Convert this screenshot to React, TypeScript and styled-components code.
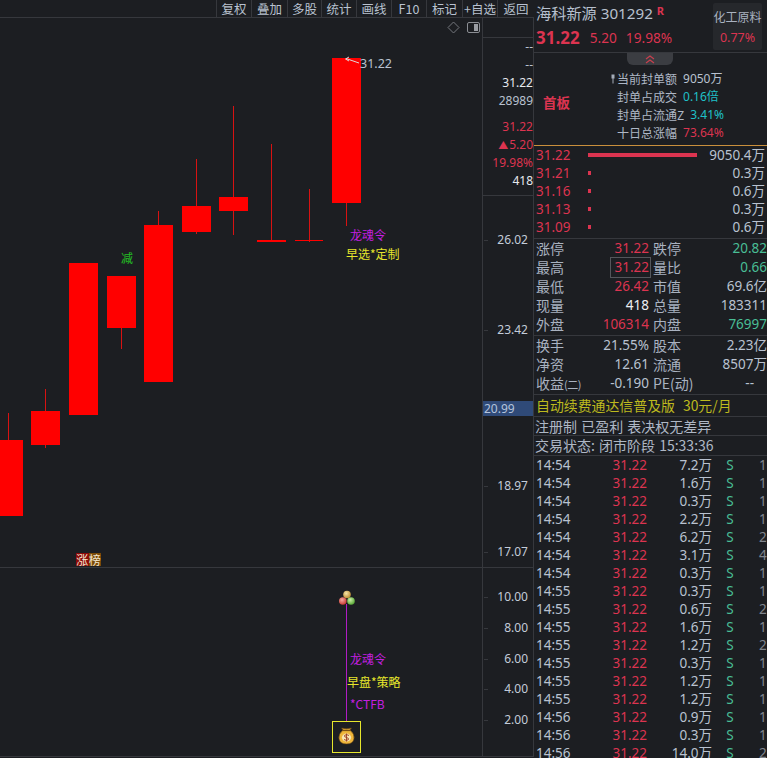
import React from "react";
import styled, { createGlobalStyle } from "styled-components";

const FONT = `"Noto Sans", "Noto Sans CJK SC", sans-serif`;
const CJK = `"Noto Sans CJK SC", "Noto Sans", sans-serif`;
const BG = "#1c1e22";
const LINE = "#36383d";
const TEXT = "#b9c2d0";
const RED = "#dc3450";
const GREEN = "#49bd95";

const Global = createGlobalStyle`
  html, body { margin: 0; padding: 0; background: ${BG}; }
  * { box-sizing: border-box; }
`;

const Page = styled.div`
  display: flex; width: 767px; height: 758px; overflow: hidden;
  background: ${BG}; color: ${TEXT}; font-family: ${FONT};
`;
const Left = styled.div`
  width: 534px; height: 758px; display: flex; flex-direction: column; flex: none;
`;
const Toolbar = styled.div`
  height: 18px; display: flex; justify-content: flex-end; border-bottom: 1px solid ${LINE}; flex: none;
`;
const ToolButton = styled.div`
  width: ${p => p.$w}px; height: 17px; border-left: 1px solid ${LINE};
  display: flex; align-items: center; justify-content: center;
  font: 12.5px/17px ${CJK}; color: ${TEXT}; white-space: nowrap;
`;
const MainPane = styled.div`
  height: 550px; display: flex; border-bottom: 1px solid ${LINE}; flex: none;
`;
const SubPane = styled.div`
  height: 189px; display: flex; border-bottom: 1px solid ${LINE}; flex: none;
`;
const Canvas = styled.div`
  position: relative; width: 482px; height: 100%; flex: none;
`;
const ChartSvg = styled.svg`
  position: absolute; left: 0; top: 0; display: block;
`;
const CornerIcons = styled.div`
  position: absolute; right: 2px; top: 3px; display: flex; align-items: center; gap: 7px;
`;
const Note = styled.div`
  position: absolute; left: ${p => p.$x}px; top: ${p => p.$y}px; transform: translateY(-50%);
  font: 12px/16px ${CJK}; color: ${p => p.$c}; white-space: nowrap;
`;
const PriceTag = styled(Note)`
  font: 12.5px/16px ${FONT};
`;
const Badge = styled.div`
  position: absolute; left: 76px; top: 535px; height: 13px; display: flex;
  font: 12px/13px ${CJK}; color: #f4e6d0;
`;
const BadgeCell = styled.span`
  width: 12.5px; text-align: center; background: ${p => p.$c};
`;
const Axis = styled.div`
  position: relative; width: 52px; height: 100%; flex: none;
  border-left: 1px solid ${LINE}; border-right: 1px solid ${LINE};
`;
const AxisHead = styled.div`
  height: 20px; border-bottom: 1px solid ${LINE};
`;
const AxisQuote = styled.div`
  height: 158px; border-bottom: 1px solid ${LINE}; display: flex; flex-direction: column;
`;
const AxisValue = styled.div`
  height: 18px; flex: none; text-align: right; font: 12px/18px ${FONT}; color: ${p => p.$c || TEXT};
  margin-top: ${p => p.$gap || 0}px; white-space: nowrap;
`;
const Triangle = styled.span`
  font-size: 10px; margin-right: 1px;
`;
const Scale = styled.div`
  position: absolute; right: 5px; top: ${p => p.$y}px; transform: translateY(-50%);
  font: 12px/14px ${FONT}; color: #c3ccd9;
`;
const Tick = styled.div`
  position: absolute; left: 1px; top: ${p => p.$y}px; width: 4px; height: 1px; background: ${LINE};
`;
const Current = styled.div`
  position: absolute; left: 0; right: 0; top: 383px; height: 15px; background: #2f4a78;
  font: 12px/15px ${FONT}; color: #b4c4dc; padding-left: 1px;
`;

const Right = styled.div`
  width: 233px; height: 758px; flex: none; display: flex; flex-direction: column; overflow: hidden;
`;
const Header = styled.div`
  height: 53px; flex: none; display: flex; justify-content: space-between;
  border-bottom: 1px solid ${LINE}; padding: 3px 5px 0 2px;
`;
const Identity = styled.div`
  display: flex; flex-direction: column;
`;
const NameRow = styled.div`
  height: 20px; display: flex; align-items: center; gap: 5px; font: 15.2px/20px ${FONT}; white-space: nowrap; color: #b7c0ce;
`;
const Flag = styled.span`
  font: bold 11px/11px ${FONT}; color: ${RED}; margin: -6px 0 0 -1px;
`;
const QuoteRow = styled.div`
  display: flex; align-items: center; gap: 9px; height: 24px; margin-top: 3px; color: ${RED}; font: 13.7px/24px ${FONT};
  white-space: nowrap;
`;
const BigPrice = styled.span`
  font: bold 17px/24px ${FONT}; margin-right: 1px;
`;
const Sector = styled.div`
  width: 49px; height: 47px; background: #26282c; display: flex; flex-direction: column;
  align-items: center; justify-content: space-between; padding: 3px 0 3px; border-radius: 2px;
`;
const SectorName = styled.div`
  font: 12px/18px ${CJK}; color: #a9b2c0; white-space: nowrap; margin-top: 2px;
`;
const SectorValue = styled.div`
  font: 12.5px/18px ${FONT}; color: ${RED};
`;
const Seal = styled.div`
  position: relative; height: 93px; flex: none; display: flex; border-bottom: 1px solid #c98f3c;
`;
const Collapse = styled.div`
  position: absolute; left: 93px; top: 0; width: 46px; height: 12px; background: #3b3d42;
  border-radius: 0 0 6px 6px; display: flex; align-items: center; justify-content: center;
`;
const Board = styled.div`
  width: 83px; flex: none; padding: 40px 0 0 9px; font: bold 13.5px/18px ${CJK}; color: ${RED};
`;
const SealRows = styled.div`
  position: relative; padding-top: 17px; display: flex; flex-direction: column;
`;
const SealRow = styled.div`
  height: 18px; display: flex; gap: 6px; font: 12px/18px ${CJK}; color: #aeb7c5; white-space: nowrap;
`;
const SealValue = styled.span`
  font: 12px/18px ${FONT}; color: ${p => p.$c};
`;
const Pin = styled.svg`
  position: absolute; left: -6px; top: 21px;
`;
const Book = styled.div`
  height: 93px; flex: none; border-bottom: 1px solid ${LINE}; padding-bottom: 3px;
`;
const BookRow = styled.div`
  height: 18px; display: flex; align-items: center; padding: 0 2px; font: 13.5px/18px ${FONT};
`;
const BookPrice = styled.span`
  width: 52px; flex: none; color: ${RED};
`;
const BookBar = styled.span`
  display: block; height: 4px; flex: none; background: ${RED};
`;
const BookQty = styled.span`
  margin-left: auto; color: ${TEXT};
`;
const Stats = styled.div`
  flex: none; height: ${p => p.$h}px; border-bottom: 1px solid ${LINE};
  display: grid; grid-template-columns: 117px 116px; grid-auto-rows: 19px;
`;
const Stat = styled.div`
  display: flex; justify-content: space-between; align-items: center; padding: 0 ${p => p.$r}px 0 2px; white-space: nowrap;
`;
const StatLabel = styled.span`
  font: 14px/19px ${CJK}; color: #a9b2c0;
`;
const SmallParen = styled.span`
  font-size: 11px; letter-spacing: -0.5px;
`;
const StatValue = styled.span`
  font: 13.5px/19px ${FONT}; color: ${p => p.$c || TEXT};
  ${p => p.$boxed && `outline: 1px solid #54565b; padding: 0 1px 0 3px; margin-right: -1px;`}
  ${p => p.$inset && `margin-right: 13px;`}
`;
const Ad = styled.div`
  height: 22px; flex: none; border-bottom: 1px solid ${LINE}; padding-left: 2px;
  font: 13.9px/21px ${CJK}; color: #bdb91e; white-space: nowrap; display: flex; gap: 8px;
`;
const InfoRow = styled.div`
  height: ${p => p.$h}px; flex: none; border-bottom: 1px solid ${LINE}; padding-left: 1px;
  font: 14px/${p => p.$h - 1}px ${CJK}; word-spacing: 1px; color: #aeb7c5; white-space: nowrap;
`;
const Ticks = styled.div`
  display: flex; flex-direction: column; flex: none;
`;
const TickRow = styled.div`
  height: 18px; flex: none; display: flex; padding-left: 2px; font: 13.5px/18px ${FONT}; white-space: nowrap;
`;
const TickTime = styled.span`
  width: 60px; flex: none; color: ${TEXT};
`;
const TickPrice = styled.span`
  width: 51px; flex: none; text-align: right; color: ${RED};
`;
const TickVol = styled.span`
  width: 65px; flex: none; text-align: right; color: ${TEXT};
`;
const TickSide = styled.span`
  width: 36px; flex: none; text-align: center; color: ${GREEN};
`;
const TickCount = styled.span`
  margin-left: 11px; color: #80858d;
`;

const TOP = 18;
const candles = [
  [-4, 27, 440, 516, 8.5, 413, 440],
  [31, 29, 411, 445, 45.5, 389, 448],
  [69, 29, 263, 415, 83.5, 263, 415],
  [107, 29, 276, 328, 121.5, 276, 349],
  [144, 29, 225, 382, 158.5, 211, 382],
  [182, 29, 206, 232, 196.5, 159, 234],
  [219, 29, 197, 211, 233.5, 106, 235],
  [257, 29, 240, 242, 271.5, 144, 242],
  [295, 28, 240, 241, 309.5, 189, 242],
  [332, 29, 58, 203, 346.5, 58, 226],
];

const tools: [string, number][] = [["复权", 35], ["叠加", 36], ["多股", 34], ["统计", 35], ["画线", 35], ["F10", 35], ["标记", 36], ["+自选", 35], ["返回", 37]];
const quoteAxis: [React.ReactNode, string?, number?][] = [
  ["--"], ["--"], ["31.22", "#e6e9ee"], ["28989"],
  ["31.22", RED, 8], [<><Triangle>▲</Triangle>5.20</>, RED], ["19.98%", RED], ["418", "#e6e9ee"],
];
const book: [string, number, string][] = [["31.22", 109, "9050.4万"], ["31.21", 3, "0.3万"], ["31.16", 3, "0.6万"], ["31.13", 3, "0.3万"], ["31.09", 3, "0.6万"]];
const ticks: [string, string, number][] = [
  ["14:54", "7.2万", 1], ["14:54", "1.6万", 1], ["14:54", "0.3万", 1], ["14:54", "2.2万", 1], ["14:54", "6.2万", 2], ["14:54", "3.1万", 4], ["14:54", "0.3万", 1],
  ["14:55", "0.3万", 1], ["14:55", "0.6万", 2], ["14:55", "1.6万", 1], ["14:55", "1.2万", 2], ["14:55", "0.3万", 1], ["14:55", "1.2万", 1], ["14:55", "1.2万", 1],
  ["14:56", "0.9万", 1], ["14:56", "0.3万", 1], ["14:56", "14.0万", 2],
];
type StatItem = { label: React.ReactNode; value: string; color?: string; boxed?: boolean; inset?: boolean };
const stats1: StatItem[] = [
  { label: "涨停", value: "31.22", color: RED }, { label: "跌停", value: "20.82", color: GREEN },
  { label: "最高", value: "31.22", color: RED, boxed: true }, { label: "量比", value: "0.66", color: GREEN },
  { label: "最低", value: "26.42", color: RED }, { label: "市值", value: "69.6亿" },
  { label: "现量", value: "418", color: "#eceff3" }, { label: "总量", value: "183311" },
  { label: "外盘", value: "106314", color: RED }, { label: "内盘", value: "76997", color: GREEN },
];
const stats2: StatItem[] = [
  { label: "换手", value: "21.55%" }, { label: "股本", value: "2.23亿" },
  { label: "净资", value: "12.61" }, { label: "流通", value: "8507万" },
  { label: <>收益<SmallParen>(二)</SmallParen></>, value: "-0.190" }, { label: "PE(动)", value: "--", inset: true },
];

function StatGrid({ items, h }: { items: StatItem[]; h: number }) {
  return (
    <Stats $h={h}>
      {items.map((it, i) => (
        <Stat key={i} $r={i % 2 ? 0 : 2}>
          <StatLabel>{it.label}</StatLabel>
          <StatValue $c={it.color} $boxed={it.boxed} $inset={it.inset}>{it.value}</StatValue>
        </Stat>
      ))}
    </Stats>
  );
}

export default function App() {
  return (
    <Page>
      <Global />
      <Left>
        <Toolbar>
          {tools.map(([t, w]) => <ToolButton key={t} $w={w}>{t}</ToolButton>)}
        </Toolbar>
        <MainPane>
          <Canvas>
            <ChartSvg width="482" height="550" viewBox={`0 ${TOP} 482 550`}>
              {candles.map(([x, w, t, b, wx, wt, wb], i) => (
                <g key={i}>
                  <line x1={wx} x2={wx} y1={wt} y2={wb} stroke="#d81212" strokeWidth="1" />
                  <rect x={x} y={t} width={w} height={b - t} fill="#ff0000" />
                </g>
              ))}
              <path d="M359 63 L346 58.5 M349 57 L345.5 59 L349 61" fill="none" stroke="#e4d8d8" strokeWidth="1" />
            </ChartSvg>
            <CornerIcons>
              <svg width="13" height="13" viewBox="0 0 13 13"><path d="M6.5 1 L12 6.5 L6.5 12 L1 6.5 Z" fill="none" stroke="#74777d" strokeWidth="1" /></svg>
              <svg width="13" height="11" viewBox="0 0 13 11"><rect x="0.5" y="0.5" width="12" height="10" rx="1.5" fill="none" stroke="#8b8e94" /><rect x="7" y="2" width="4" height="7" fill="#9a9da3" /></svg>
            </CornerIcons>
            <PriceTag $x={360} $y={45.5} $c="#b9c2d0">31.22</PriceTag>
            <Note $x={121} $y={240} $c="#24c024">减</Note>
            <Note $x={350} $y={216.5} $c="#c41fe0">龙魂令</Note>
            <Note $x={346} $y={236} $c="#e6e62c">早选*定制</Note>
            <Badge>
              <BadgeCell $c="#8a0a0a">涨</BadgeCell>
              <BadgeCell $c="#7a4a08">榜</BadgeCell>
            </Badge>
          </Canvas>
          <Axis>
            <AxisHead />
            <AxisQuote>
              {quoteAxis.map(([v, c, g], i) => <AxisValue key={i} $c={c} $gap={g}>{v}</AxisValue>)}
            </AxisQuote>
            {[[222, "26.02"], [312, "23.42"], [468, "18.97"], [534, "17.07"]].map(([y, v]) => (
              <React.Fragment key={v as string}>
                <Tick $y={y} />
                <Scale $y={y}>{v}</Scale>
              </React.Fragment>
            ))}
            <Current>20.99</Current>
          </Axis>
        </MainPane>
        <SubPane>
          <Canvas>
            <ChartSvg width="482" height="188" viewBox="0 568 482 188">
              <line x1="346.5" x2="346.5" y1="604" y2="721" stroke="#b01cc4" strokeWidth="1" />
              <defs>
                <radialGradient id="ba" cx="40%" cy="35%" r="70%"><stop offset="0" stopColor="#f6e6a8" /><stop offset="1" stopColor="#b8862a" /></radialGradient>
                <radialGradient id="bb" cx="40%" cy="35%" r="70%"><stop offset="0" stopColor="#f4a9a0" /><stop offset="1" stopColor="#c8322a" /></radialGradient>
                <radialGradient id="bc" cx="40%" cy="35%" r="70%"><stop offset="0" stopColor="#cdeea8" /><stop offset="1" stopColor="#4fa32e" /></radialGradient>
              </defs>
              <circle cx="347" cy="594.5" r="3.8" fill="url(#ba)" />
              <circle cx="342.8" cy="601" r="3.8" fill="url(#bb)" />
              <circle cx="351" cy="601" r="3.8" fill="url(#bc)" />
              <rect x="332.5" y="721.5" width="28" height="31" fill="none" stroke="#e6e62c" strokeWidth="1" />
              <path d="M343 730 L341.5 728 Q346.5 729.5 351.5 728 L350 730 Q355 734 354 739 Q353 744 346.5 744 Q340 744 339 739 Q338 734 343 730 Z" fill="#eeb53a" stroke="#5a3a10" strokeWidth="0.6" />
              <rect x="342.5" y="729.7" width="8" height="1.4" fill="#7a4f12" />
              <ellipse cx="346.5" cy="737.5" rx="4.6" ry="4" fill="#f7e6b6" />
              <path d="M349 735.5 Q346.5 733.8 344.6 735.3 Q343.8 737 346.5 737.5 Q349.2 738 348.4 739.7 Q346.5 741.2 344 739.5 M346.5 733.5 V741.5" fill="none" stroke="#9a3b20" strokeWidth="0.9" />
            </ChartSvg>
            <Note $x={350} $y={91} $c="#c41fe0">龙魂令</Note>
            <Note $x={347} $y={114} $c="#e6e62c">早盘*策略</Note>
            <Note $x={350} $y={136} $c="#c41fe0">*CTFB</Note>
          </Canvas>
          <Axis>
            {[[29, "10.00"], [60, "8.00"], [91, "6.00"], [121, "4.00"], [152, "2.00"]].map(([y, v]) => (
              <React.Fragment key={v as string}>
                <Tick $y={y} />
                <Scale $y={y}>{v}</Scale>
              </React.Fragment>
            ))}
          </Axis>
        </SubPane>
      </Left>
      <Right>
        <Header>
          <Identity>
            <NameRow>海科新源 301292<Flag>R</Flag></NameRow>
            <QuoteRow><BigPrice>31.22</BigPrice><span>5.20</span><span>19.98%</span></QuoteRow>
          </Identity>
          <Sector>
            <SectorName>化工原料</SectorName>
            <SectorValue>0.77%</SectorValue>
          </Sector>
        </Header>
        <Seal>
          <Collapse>
            <svg width="12" height="9" viewBox="0 0 12 9"><path d="M2 4 L6 1 L10 4 M2 8 L6 5 L10 8" fill="none" stroke="#c8404f" strokeWidth="1.2" /></svg>
          </Collapse>
          <Board>首板</Board>
          <SealRows>
            <Pin width="4" height="10" viewBox="0 0 4 10"><path d="M0.5 0.5 H3.5 V4.5 H2.5 V9.5 H1.5 V4.5 H0.5 Z" fill="#a4acb8" /></Pin>
            <SealRow>当前封单额<SealValue $c="#b9c2d0">9050万</SealValue></SealRow>
            <SealRow>封单占成交<SealValue $c="#1fc0c8">0.16倍</SealValue></SealRow>
            <SealRow>封单占流通Z<SealValue $c="#1fc0c8">3.41%</SealValue></SealRow>
            <SealRow>十日总涨幅<SealValue $c={RED}>73.64%</SealValue></SealRow>
          </SealRows>
        </Seal>
        <Book>
          {book.map(([p, w, q]) => (
            <BookRow key={p}>
              <BookPrice>{p}</BookPrice>
              <BookBar style={{ width: w }} />
              <BookQty>{q}</BookQty>
            </BookRow>
          ))}
        </Book>
        <StatGrid items={stats1} h={97} />
        <StatGrid items={stats2} h={59} />
        <Ad><span>自动续费通达信普及版</span><span>30元/月</span></Ad>
        <InfoRow $h={19}>注册制 已盈利 表决权无差异</InfoRow>
        <InfoRow $h={20}>交易状态: 闭市阶段 15:33:36</InfoRow>
        <Ticks>
          {ticks.map(([t, v, n], i) => (
            <TickRow key={i}>
              <TickTime>{t}</TickTime>
              <TickPrice>31.22</TickPrice>
              <TickVol>{v}</TickVol>
              <TickSide>S</TickSide>
              <TickCount>{n}</TickCount>
            </TickRow>
          ))}
        </Ticks>
      </Right>
    </Page>
  );
}
